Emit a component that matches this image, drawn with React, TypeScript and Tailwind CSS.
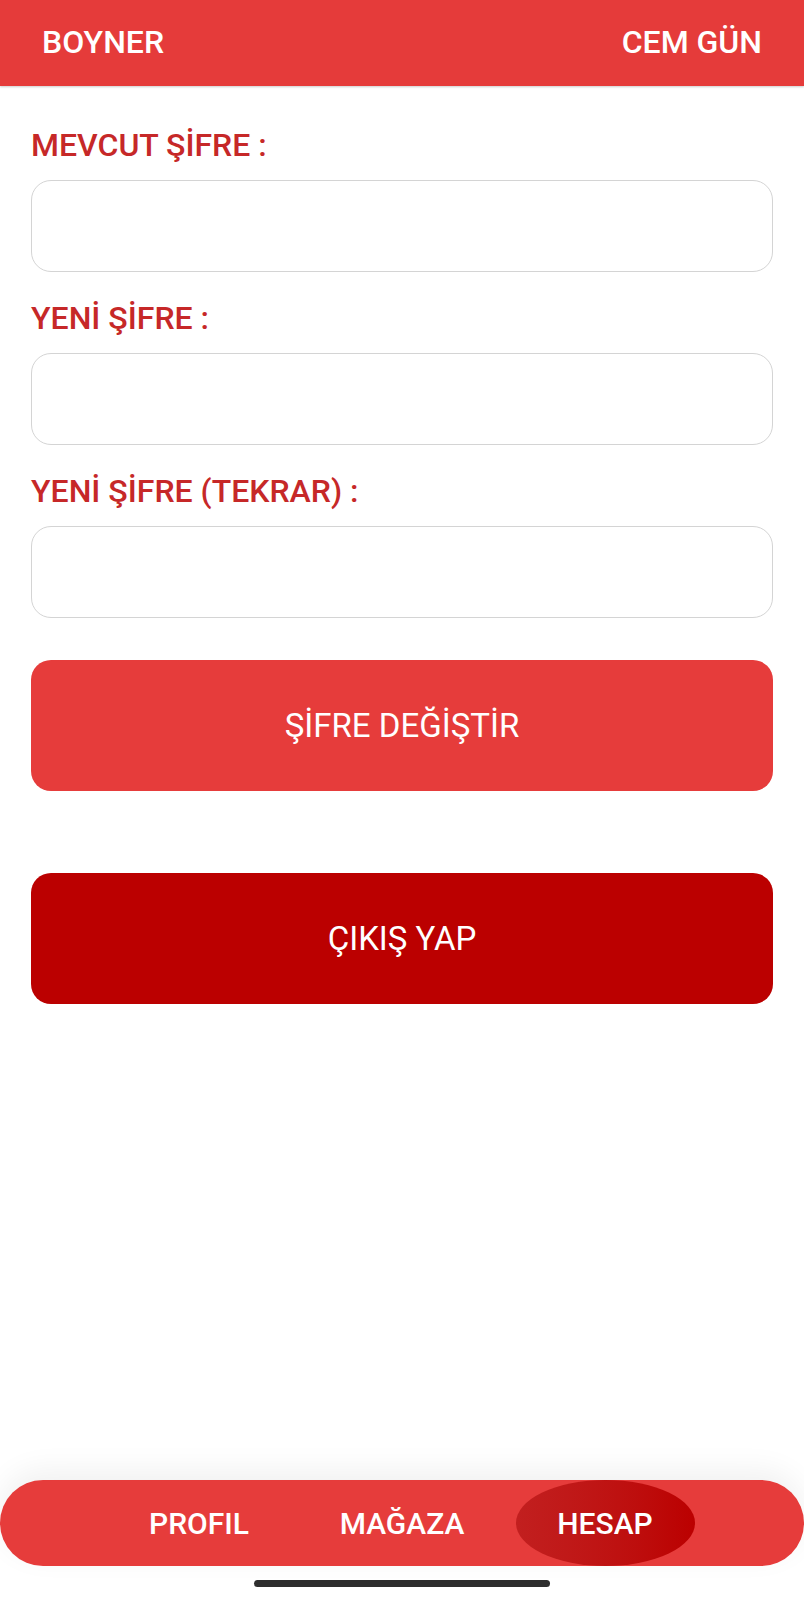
import React from "react";

const font = { fontFamily: "Roboto, 'Noto Sans', sans-serif" };

function Field({ label }: { label: string }) {
  return (
    <div className="flex flex-col">
      <label className="text-[32px] leading-[36px] font-medium text-[#c62828] mb-[17px]">{label}</label>
      <input
        type="password"
        className="h-[92px] w-full rounded-[20px] border-[1.5px] border-[#d4d4d4] bg-white outline-none"
      />
    </div>
  );
}

export default function App() {
  return (
    <div className="w-full h-[1600px] bg-white flex flex-col" style={font}>
      <header className="h-[86px] bg-[#e53b3a] flex items-center justify-between pl-[42px] pr-[42px] pb-[2px] shadow-[0_1px_2px_rgba(0,0,0,0.2)]">
        <span className="text-white text-[32px] font-medium">BOYNER</span>
        <span className="text-white text-[32px] font-medium">CEM GÜN</span>
      </header>

      <main className="flex flex-col px-[31px] pt-[41px]">
        <div className="flex flex-col gap-[28px]">
          <Field label="MEVCUT ŞİFRE :" />
          <Field label="YENİ ŞİFRE :" />
          <Field label="YENİ ŞİFRE (TEKRAR) :" />
        </div>
        <button className="mt-[42px] h-[131px] w-full rounded-[20px] bg-[#e63c3b] text-white text-[33px]">
          ŞİFRE DEĞİŞTİR
        </button>
        <button className="mt-[82px] h-[131px] w-full rounded-[20px] bg-[#bb0000] text-white text-[33px]">
          ÇIKIŞ YAP
        </button>
      </main>

      <div className="flex-1" />

      <nav className="h-[86px] w-full rounded-full bg-[#e63c3b] flex items-center justify-center gap-[24px] shadow-[0_-10px_30px_rgba(0,0,0,0.06)]">
        <div className="w-[179px] h-full flex items-center justify-center text-white text-[30px] font-medium">PROFIL</div>
        <div className="w-[179px] h-full flex items-center justify-center text-white text-[30px] font-medium">MAĞAZA</div>
        <div className="w-[179px] h-full flex items-center justify-center rounded-[50%] bg-gradient-to-r from-[#c21f1f] to-[#bb0000] text-white text-[30px] font-medium">HESAP</div>
      </nav>

      <div className="h-[34px] flex items-center justify-center">
        <div className="w-[296px] h-[7px] rounded-full bg-[#2e2e2e]" />
      </div>
    </div>
  );
}
